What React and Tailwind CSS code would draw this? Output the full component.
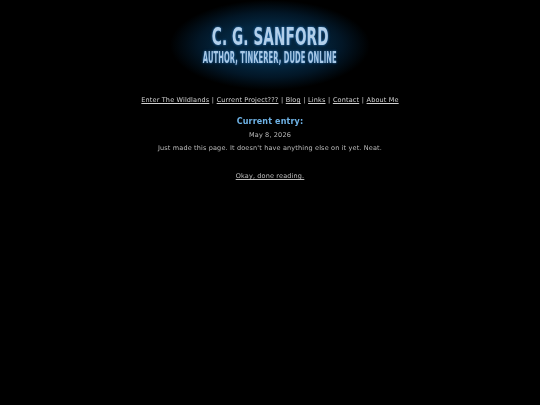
const links = ["Enter The Wildlands", "Current Project???", "Blog", "Links", "Contact", "About Me"];

function Logo() {
  return (
    <div className="w-[200px] h-[90px] flex flex-col items-center pt-[24px] bg-[radial-gradient(ellipse_50%_50%_at_50%_50%,#04263f_0%,#04263f_45%,#021626_72%,#000000_100%)]">
      <div className="font-['DejaVu_Sans',sans-serif] font-bold text-[22px] leading-[26px] text-[#b2cfea] [text-shadow:0_0_3px_#2f7fc8] whitespace-nowrap scale-x-[0.62] scale-y-[1.1]">
        C. G. SANFORD
      </div>
      <div className="mt-[1px] font-['DejaVu_Sans',sans-serif] font-bold text-[13px] leading-[14px] text-[#a8c8e6] [text-shadow:0_0_3px_#2f7fc8] whitespace-nowrap scale-x-[0.52] scale-y-[1.2]">
        AUTHOR, TINKERER, DUDE ONLINE
      </div>
    </div>
  );
}

export default function App() {
  return (
    <div className="min-h-[405px] bg-black">
      <div className="flex flex-col items-center font-['DejaVu_Sans',sans-serif] text-[6.5px] tracking-[0.15px] text-[#bdbdbd] antialiased [will-change:transform]">
        <Logo />
        <nav className="mt-[5px] leading-[10px] flex gap-[2.5px] text-[#d0d0d0]">
          {links.map((l, i) => (
            <span key={l} className="flex gap-[2.5px]">
              {i > 0 && <span>|</span>}
              <a className="underline" href="#">{l}</a>
            </span>
          ))}
        </nav>
        <h2 className="mt-[11px] font-bold text-[8px] leading-[12px] text-[#6fb3e6]">Current entry:</h2>
        <p className="mt-[2px] leading-[10px]">May 8, 2026</p>
        <p className="mt-[3px] leading-[10px]">Just made this page. It doesn't have anything else on it yet. Neat.</p>
        <a className="mt-[18px] leading-[10px] underline" href="#">Okay, done reading.</a>
      </div>
    </div>
  );
}
